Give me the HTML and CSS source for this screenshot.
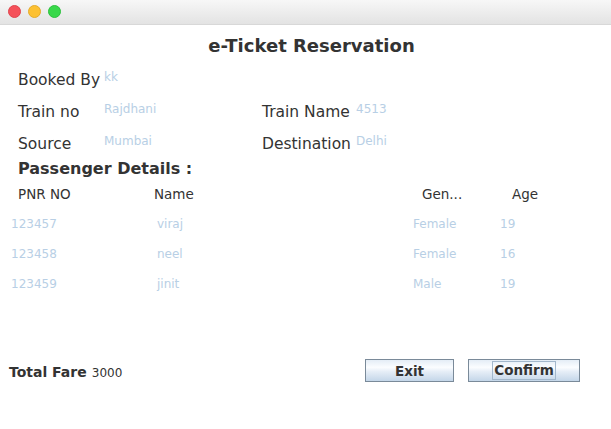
FILE: index.html
```html
<!DOCTYPE html>
<html>
<head>
<meta charset="utf-8">
<link rel="stylesheet" href="styles.css">
</head>
<body>
<div class="window">
  <div class="titlebar">
    <span class="light red"></span>
    <span class="light yellow"></span>
    <span class="light green"></span>
  </div>
  <h1 class="title">e-Ticket Reservation</h1>
  <div class="details">
    <span class="label">Booked By</span><span class="value">kk</span><span></span><span></span>
    <span class="label">Train no</span><span class="value">Rajdhani</span><span class="label">Train Name</span><span class="value">4513</span>
    <span class="label">Source</span><span class="value">Mumbai</span><span class="label">Destination</span><span class="value">Delhi</span>
  </div>
  <h2 class="section">Passenger Details :</h2>
  <div class="thead">
    <span class="th th1">PNR NO</span>
    <span class="th th2">Name</span>
    <span class="th th3">Gen...</span>
    <span class="th th4">Age</span>
  </div>
  <div class="tbody">
    <span class="td td1">123457</span><span class="td td2">viraj</span><span class="td td3">Female</span><span class="td td4">19</span>
    <span class="td td1">123458</span><span class="td td2">neel</span><span class="td td3">Female</span><span class="td td4">16</span>
    <span class="td td1">123459</span><span class="td td2">jinit</span><span class="td td3">Male</span><span class="td td4">19</span>
  </div>
  <div class="footer">
    <div class="fare"><span class="fare-label">Total Fare</span> <span class="fare-value">3000</span></div>
    <div class="buttons">
      <button class="btn btn-exit">Exit</button>
      <button class="btn btn-confirm"><span class="focus">Confirm</span></button>
    </div>
  </div>
</div>
</body>
</html>
```
FILE: styles.css
```css
* { box-sizing: border-box; }
html, body {
  margin: 0;
  padding: 0;
  background: #ffffff;
}
body {
  font-family: "DejaVu Sans", "Liberation Sans", sans-serif;
  color: #333333;
  width: 611px;
  height: 429px;
  overflow: hidden;
}
.window {
  width: 611px;
  height: 429px;
}
.titlebar {
  height: 25px;
  background: linear-gradient(#f7f7f7, #e3e3e3);
  border-bottom: 1px solid #d8d8d8;
  display: flex;
  align-items: center;
  gap: 7px;
  padding-left: 7.5px;
  padding-bottom: 1px;
}
.light {
  width: 13px;
  height: 13px;
  border-radius: 50%;
  display: block;
}
.red { background: #f5515a; border: 0.5px solid #e0444d; }
.yellow { background: #fdc132; border: 0.5px solid #e5ab2a; }
.green { background: #38d84a; border: 0.5px solid #2cc03d; }

.title {
  margin: 10px 0 0 0;
  padding-left: 12px;
  text-align: center;
  font-size: 18px;
  font-weight: bold;
  line-height: 21px;
  height: 21px;
  color: #333333;
}
.details {
  margin-top: 14px;
  padding-left: 18px;
  display: grid;
  grid-template-columns: 86px 158px 94px 1fr;
  grid-auto-rows: 20px;
  row-gap: 12px;
  align-items: start;
}
.label {
  font-size: 15.5px;
  line-height: 20px;
  white-space: nowrap;
  color: #333333;
}
.value {
  font-size: 12px;
  line-height: 14px;
  color: #b8cfe5;
  white-space: nowrap;
}
.section {
  margin: 5px 0 0 0;
  padding-left: 18px;
  font-size: 16px;
  font-weight: bold;
  line-height: 20px;
  height: 20px;
  color: #333333;
}
.thead, .tbody {
  display: grid;
  grid-template-columns: 146px 256px 90px 1fr;
}
.thead {
  margin-top: 7px;
  height: 16px;
}
.th {
  font-size: 13.5px;
  line-height: 16px;
  color: #333333;
}
.th1 { padding-left: 18px; }
.th2 { padding-left: 8px; }
.th3 { padding-left: 20px; }
.th4 { padding-left: 20px; }
.tbody {
  margin-top: 15px;
  grid-auto-rows: 14px;
  row-gap: 16px;
}
.td {
  font-size: 12px;
  line-height: 14px;
  color: #b8cfe5;
}
.td1 { padding-left: 11px; }
.td2 { padding-left: 11px; }
.td3 { padding-left: 11px; }
.td4 { padding-left: 8px; }

.footer {
  margin-top: 68px;
  height: 23px;
  display: flex;
  align-items: flex-start;
  padding-left: 9px;
}
.fare {
  margin-top: 5px;
  line-height: 16px;
  white-space: nowrap;
  width: 356px;
}
.fare-label {
  font-size: 14px;
  font-weight: bold;
  color: #333333;
}
.fare-value {
  font-size: 12px;
  color: #333333;
}
.buttons {
  display: flex;
  gap: 14px;
}
.btn {
  height: 23px;
  margin: 0;
  padding: 0;
  border: 1px solid #7a8a99;
  border-radius: 0;
  background: linear-gradient(#e4edf6, #fbfdff 35%, #e6eef7 55%, #c4d6e9);
  font-family: "DejaVu Sans", "Liberation Sans", sans-serif;
  font-size: 13.5px;
  font-weight: bold;
  color: #333333;
  display: flex;
  align-items: center;
  justify-content: center;
}
.btn-exit { width: 89px; }
.btn-confirm { width: 112px; }
.focus {
  border: 1px solid #a3b8cc;
  height: 19px;
  line-height: 17px;
  padding: 0 1px;
}
```
